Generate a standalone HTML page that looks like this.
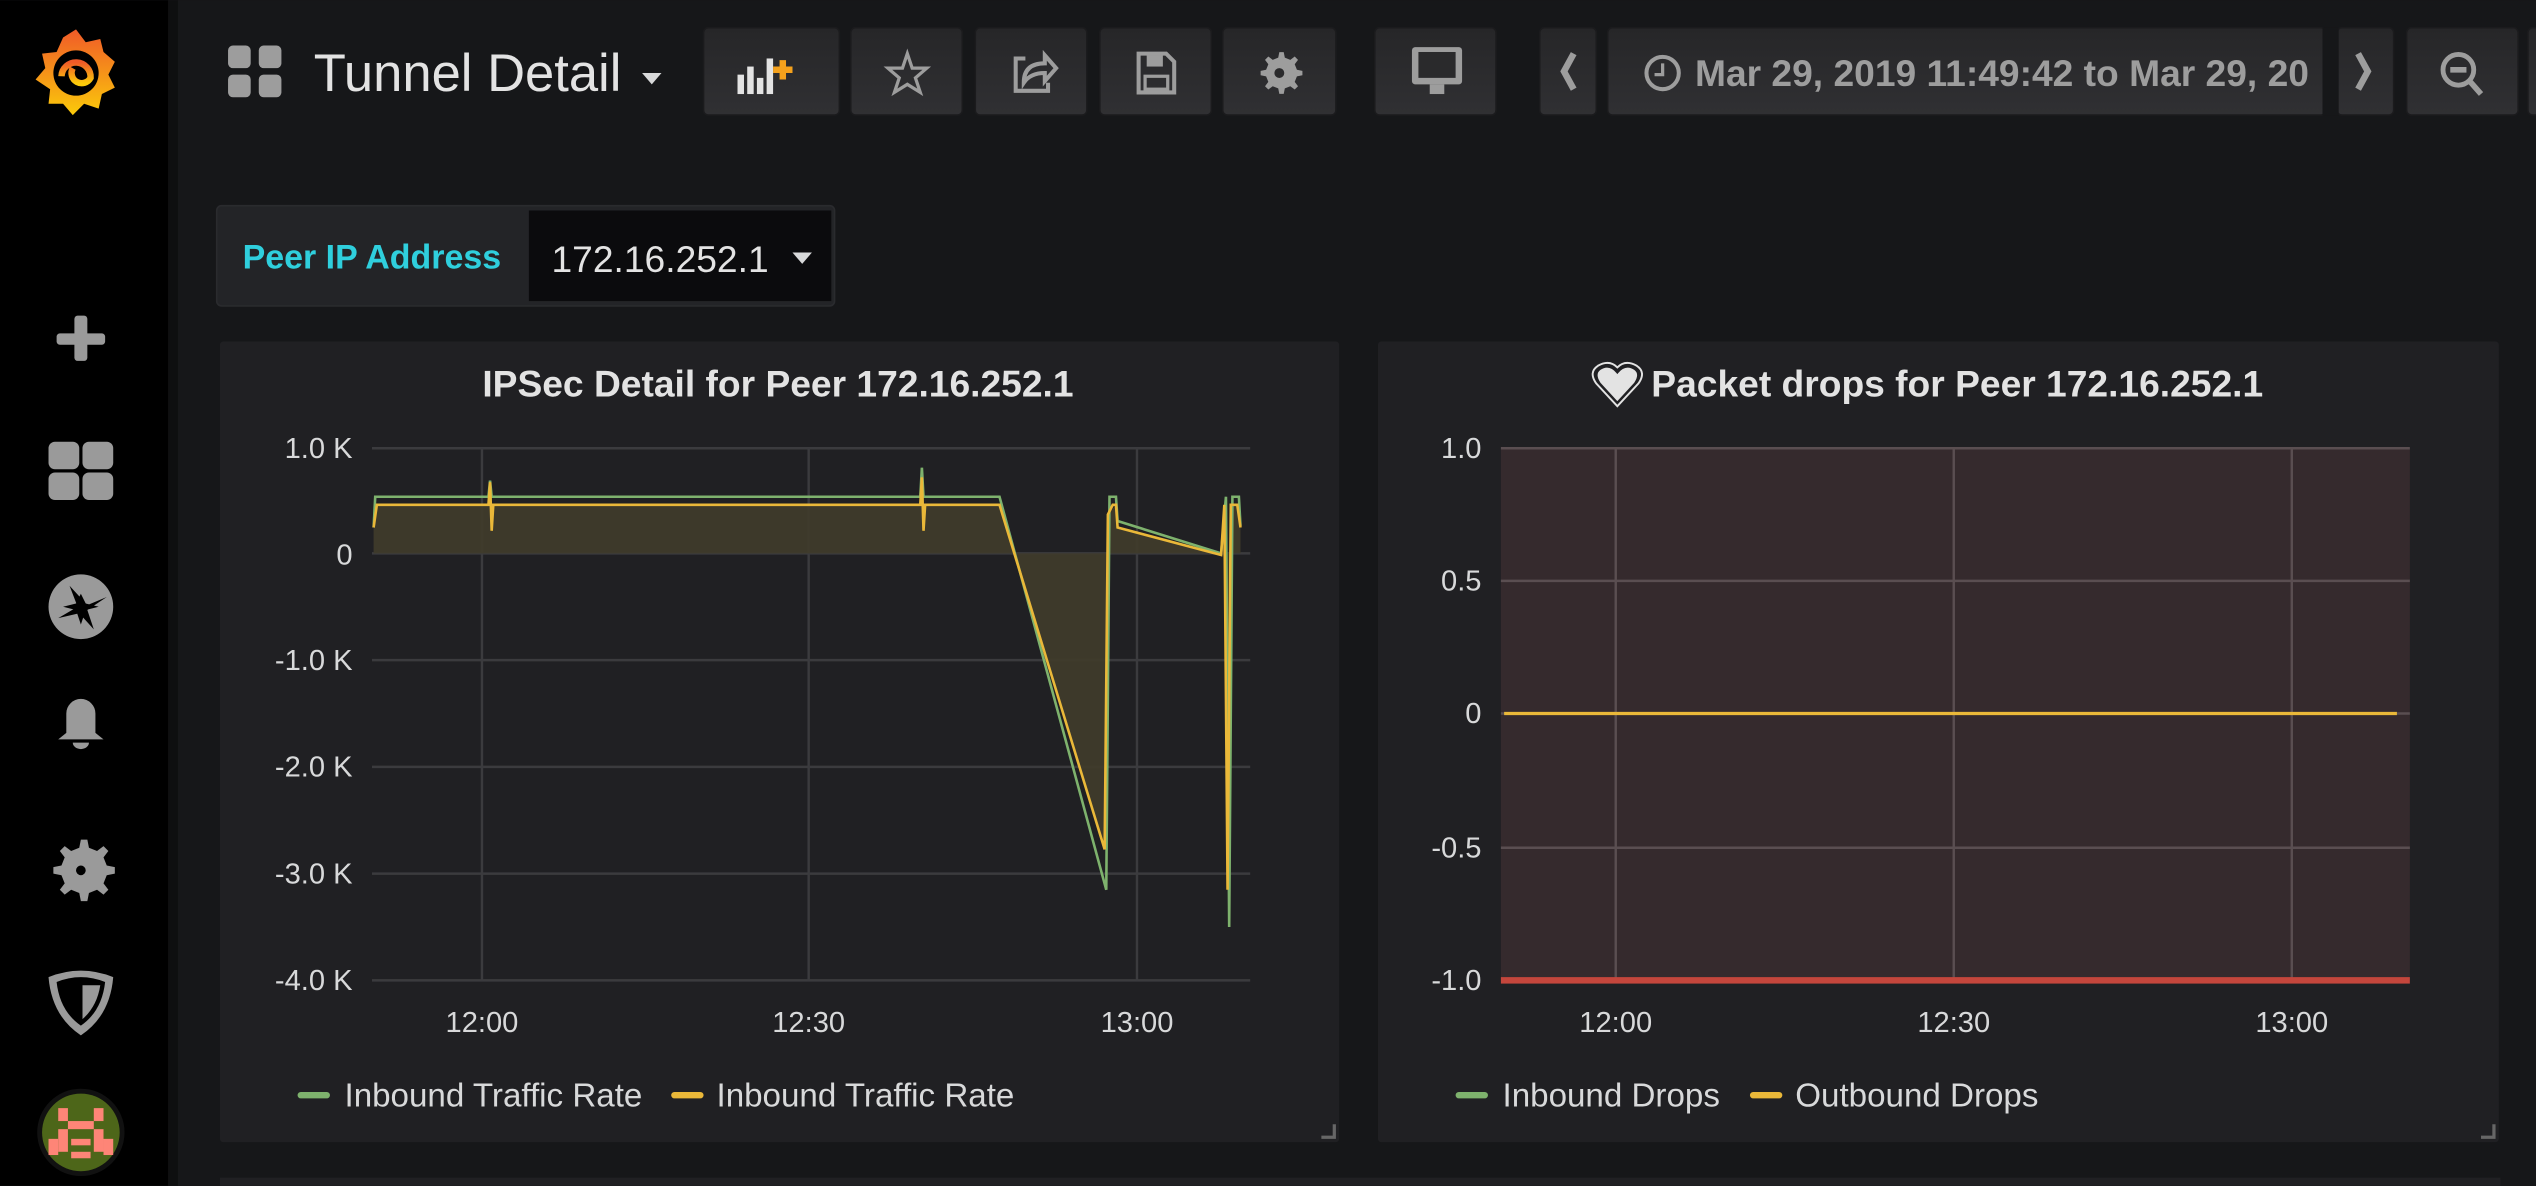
<!DOCTYPE html>
<html><head><meta charset="utf-8"><style>
html,body{margin:0;padding:0;background:#161719;width:2536px;height:1186px;overflow:hidden}
svg{display:block}
text{font-family:"Liberation Sans",sans-serif}
</style></head><body>
<svg width="2536" height="1186" viewBox="0 0 1568 733" xmlns="http://www.w3.org/2000/svg">
<defs>
<linearGradient id="lg" x1="0" y1="0" x2="0" y2="1"><stop offset="0" stop-color="#f05a28"/><stop offset="1" stop-color="#fbca0a"/></linearGradient>
<linearGradient id="bt" x1="0" y1="0" x2="0" y2="1"><stop offset="0" stop-color="#262628"/><stop offset="1" stop-color="#303033"/></linearGradient>
</defs>
<rect width="1568" height="733" fill="#161719"/>
<!-- sidebar -->
<rect x="0" y="0" width="104" height="733" fill="#000"/>
<rect x="104" y="0" width="6" height="733" fill="#0e0f10"/>
<!-- grafana logo -->
<g transform="translate(47,44)">
<path d="M0,-26 L6,-18 L15,-20 L17,-12 L24,-6 L20,2 L24,10 L16,14 L14,23 L5,20 L-2,27 L-8,20 L-17,20 L-16,11 L-25,5 L-19,-2 L-21,-11 L-12,-12 L-8,-21 Z" fill="url(#lg)"/>
<circle cx="0" cy="1" r="14" fill="#000"/>
<path d="M-9,3 A9,9 0 1 1 9,4 A6,6 0 1 1 -2,-2" fill="none" stroke="url(#lg)" stroke-width="4"/>
</g>
<!-- sidebar icons -->
<g fill="#9a9a9a">
<rect x="35" y="206" width="30" height="7" rx="2"/><rect x="46" y="195" width="8" height="28" rx="2"/>
<rect x="30" y="273" width="19" height="17" rx="4"/><rect x="51" y="273" width="19" height="17" rx="4"/>
<rect x="30" y="292" width="19" height="17" rx="4"/><rect x="51" y="292" width="19" height="17" rx="4"/>
<circle cx="50" cy="375" r="20"/>
<path d="M41,441 a9,9 0 0 1 18,0 v12 l5,4 h-28 l5,-4z"/><path d="M45,459 h10 a5,4 0 0 1 -10,0z"/>
<path id="gear" d="M50,519 l4,0 1,5 5,2 4,-3 3,3 -3,4 2,5 5,1 v4 l-5,1 -2,5 3,4 -3,3 -4,-3 -5,2 -1,5 h-4 l-1,-5 -5,-2 -4,3 -3,-3 3,-4 -2,-5 -5,-1 v-4 l5,-1 2,-5 -3,-4 3,-3 4,3 5,-2 1,-5z"/>
<path d="M30,604 Q50,596 70,604 Q68,628 50,640 Q32,628 30,604Z"/>
</g>
<path d="M50,367 l3,6 8,2 -8,2 -3,9 -3,-9 -8,-2 8,-2z M36,382 l12,-7 -5,-13 11,12 12,-5 -12,8 4,12 -9,-10z" fill="#000"/>
<circle cx="50" cy="538" r="3" fill="#000"/>
<path d="M35,607 Q50,601 65,607 Q63,625 50,634 Q37,625 35,607Z" fill="#000"/>
<path d="M51,609 L62,609 Q60,622 51,630Z" fill="#9a9a9a"/>
<circle cx="50" cy="700" r="27" fill="#111"/>
<circle cx="50" cy="700" r="24" fill="#4d6619"/>
<g fill="#fe8577"><rect x="36" y="685" width="6" height="8"/><rect x="58" y="685" width="6" height="8"/><rect x="42" y="693" width="16" height="5"/><rect x="36" y="698" width="6" height="14"/><rect x="58" y="698" width="6" height="14"/><rect x="44" y="704" width="12" height="4"/><rect x="44" y="712" width="12" height="4"/><rect x="30" y="704" width="6" height="10"/><rect x="64" y="704" width="6" height="10"/></g>

<!-- header -->
<g fill="#9d9d9d"><rect x="141" y="28" width="14" height="14" rx="3"/><rect x="160" y="28" width="14" height="14" rx="3"/><rect x="141" y="46" width="14" height="14" rx="3"/><rect x="160" y="46" width="14" height="14" rx="3"/></g>
<text x="194" y="56" font-size="32.5" fill="#e3e3e3">Tunnel Detail</text>
<path d="M397,45 h12 l-6,7z" fill="#d8d9da"/>
<g fill="url(#bt)" stroke="#1b1b1d">
<rect x="435" y="17" width="84" height="54" rx="3"/>
<rect x="526" y="17" width="69" height="54" rx="3"/>
<rect x="603" y="17" width="69" height="54" rx="3"/>
<rect x="680" y="17" width="69" height="54" rx="3"/>
<rect x="756" y="17" width="70" height="54" rx="3"/>
<rect x="850" y="17" width="75" height="54" rx="3"/>
<rect x="952" y="17" width="35" height="54" rx="3"/>
<rect x="994" y="17" width="444" height="54" rx="3"/>
<rect x="1445" y="17" width="35" height="54" rx="3"/>
<rect x="1488" y="17" width="69" height="54" rx="3"/>
<rect x="1563" y="17" width="20" height="54" rx="3"/>
</g>
<g fill="#e3e3e3"><rect x="456" y="46" width="4" height="12"/><rect x="462" y="41" width="4" height="17"/><rect x="468" y="48" width="4" height="10"/><rect x="474" y="36" width="4" height="22"/></g>
<path d="M478,43 h12 M484,37 v12" stroke="#f4a11c" stroke-width="4"/>
<path d="M561,33 l3,9 9,0 -7,6 3,9 -8,-5 -8,5 3,-9 -7,-6 9,0z" fill="none" stroke="#9d9d9d" stroke-width="2"/>
<path d="M634,36 h-6 v20 h20 v-5 M633,51 q0,-12 13,-12 v-5 l7,8 -7,8 v-5 q-9,0 -13,6z" fill="none" stroke="#9d9d9d" stroke-width="2.5"/>
<path d="M704,33 h17 l5,5 v19 h-22z" fill="none" stroke="#9d9d9d" stroke-width="2.5"/><rect x="709" y="34" width="10" height="7" fill="#9d9d9d"/><rect x="708" y="47" width="14" height="8" fill="none" stroke="#9d9d9d" stroke-width="2"/>
<g transform="translate(791,45) scale(0.68) translate(-50,-538)">
<use href="#gear" fill="#9d9d9d"/>
<circle cx="50" cy="538" r="4.5" fill="#2a2a2c"/>
</g>
<rect x="873" y="29" width="31" height="23" rx="2" fill="#9d9d9d"/><rect x="877" y="32" width="23" height="16" fill="#2a2a2c"/><rect x="884" y="52" width="9" height="6" fill="#9d9d9d"/>
<path d="M973,33 l-6,11 6,11" fill="none" stroke="#9d9d9d" stroke-width="4"/>
<path d="M1458,33 l6,11 -6,11" fill="none" stroke="#9d9d9d" stroke-width="4"/>
<circle cx="1028" cy="45" r="10" fill="none" stroke="#9d9d9d" stroke-width="2.5"/><path d="M1028,39 v7 h-5" fill="none" stroke="#9d9d9d" stroke-width="2"/>
<text x="1048" y="53" font-size="23" font-weight="bold" fill="#9d9d9d">Mar 29, 2019 11:49:42 to Mar 29, 20</text>
<rect x="1436" y="17" width="10" height="54" fill="#161719"/>
<circle cx="1520" cy="43" r="9.5" fill="none" stroke="#9d9d9d" stroke-width="3"/><path d="M1515,43 h10 M1527,50 l7,8" stroke="#9d9d9d" stroke-width="3.5"/>

<!-- variable -->
<rect x="134" y="127" width="382" height="62" rx="3" fill="#232427" stroke="#2a2b2e"/>
<rect x="327" y="130" width="187" height="56" fill="#0b0b0d"/>
<text x="150" y="166" font-size="21" font-weight="bold" fill="#2fcfdd">Peer IP Address</text>
<text x="341" y="168" font-size="23" fill="#e3e3e3">172.16.252.1</text>
<path d="M490,156 h12 l-6,7z" fill="#d8d9da"/>

<!-- panel 1 -->
<rect x="136" y="211" width="692" height="495" rx="2" fill="#202023"/>
<text x="481" y="245" font-size="23" font-weight="bold" fill="#e3e3e3" text-anchor="middle">IPSec Detail for Peer 172.16.252.1</text>
<g stroke="#3b3b3e" stroke-width="1.5">
<path d="M230,277 H773 M230,342 H773 M230,408 H773 M230,474 H773 M230,540 H773 M230,606 H773"/>
<path d="M298,277 V606 M500,277 V606 M703,277 V606"/>
</g>
<g font-size="18" fill="#d8d9da" text-anchor="end">
<text x="218" y="283">1.0 K</text><text x="218" y="349">0</text><text x="218" y="414">-1.0 K</text><text x="218" y="480">-2.0 K</text><text x="218" y="546">-3.0 K</text><text x="218" y="612">-4.0 K</text>
</g>
<g font-size="18" fill="#d8d9da" text-anchor="middle"><text x="298" y="638">12:00</text><text x="500" y="638">12:30</text><text x="703" y="638">13:00</text></g>
<path d="M231,326 L233,312 L618,312 L683,525 L685,318 L690,312 L691,326 L755,343 L757,312 L759,550 L761,312 L765,312 L767,326 L767,342 L231,342Z" fill="#3f3b2b" opacity="0.95"/>
<path d="M231,326 L232,307 L302,307 L303,297 L304,307 L569,307 L570,289 L571,307 L618,307 L684,550 L686,307 L690,307 L691,322 L755,342 L758,307 L760,573 L762,307 L766,307 L767,325" fill="none" stroke="#7eb26d" stroke-width="1.6"/>
<path d="M231,326 L233,312 L302,312 L303,298 L304,328 L305,312 L569,312 L570,295 L571,328 L572,312 L618,312 L683,525 L685,318 L688,312 L690,312 L691,326 L755,343 L757,312 L759,550 L761,312 L765,312 L767,326" fill="none" stroke="#eab839" stroke-width="1.6"/>
<rect x="184" y="675" width="20" height="4" rx="2" fill="#7eb26d"/><text x="213" y="684" font-size="20.5" fill="#d8d9da">Inbound Traffic Rate</text>
<rect x="415" y="675" width="20" height="4" rx="2" fill="#eab839"/><text x="443" y="684" font-size="20.5" fill="#d8d9da">Inbound Traffic Rate</text>
<path d="M817,703 h8 v-8" fill="none" stroke="#666" stroke-width="2"/>

<!-- panel 2 -->
<rect x="852" y="211" width="693" height="495" rx="2" fill="#202023"/>
<path d="M1000,249 L989,237 Q985,231 989,228 Q995,224 1000,230 Q1005,224 1011,228 Q1015,231 1011,237Z" fill="#e3e3e3" stroke="#202023" stroke-width="1.5"/>
<path d="M1000,251 L987,237 Q982,230 988,226 Q995,222 1000,227 Q1005,222 1012,226 Q1018,230 1013,237Z" fill="none" stroke="#e3e3e3" stroke-width="1.2"/>
<text x="1021" y="245" font-size="23" font-weight="bold" fill="#e3e3e3">Packet drops for Peer 172.16.252.1</text>
<rect x="928" y="277" width="562" height="329" fill="#352a2d"/>
<g stroke="#5a4e51" stroke-width="1.5">
<path d="M928,277 H1490 M928,359 H1490 M928,441 H1490 M928,524 H1490"/>
<path d="M999,277 V606 M1208,277 V606 M1417,277 V606"/>
</g>
<rect x="928" y="604" width="562" height="4" fill="#c4463c"/>
<path d="M930,441 H1482" stroke="#eab839" stroke-width="2"/>
<g font-size="18" fill="#d8d9da" text-anchor="end">
<text x="916" y="283">1.0</text><text x="916" y="365">0.5</text><text x="916" y="447">0</text><text x="916" y="530">-0.5</text><text x="916" y="612">-1.0</text>
</g>
<g font-size="18" fill="#d8d9da" text-anchor="middle"><text x="999" y="638">12:00</text><text x="1208" y="638">12:30</text><text x="1417" y="638">13:00</text></g>
<rect x="900" y="675" width="20" height="4" rx="2" fill="#7eb26d"/><text x="929" y="684" font-size="20.5" fill="#d8d9da">Inbound Drops</text>
<rect x="1082" y="675" width="20" height="4" rx="2" fill="#eab839"/><text x="1110" y="684" font-size="20.5" fill="#d8d9da">Outbound Drops</text>
<path d="M1534,703 h8 v-8" fill="none" stroke="#666" stroke-width="2"/>
<rect x="136" y="728" width="1410" height="5" fill="#202023"/>
</svg>
</body></html>
